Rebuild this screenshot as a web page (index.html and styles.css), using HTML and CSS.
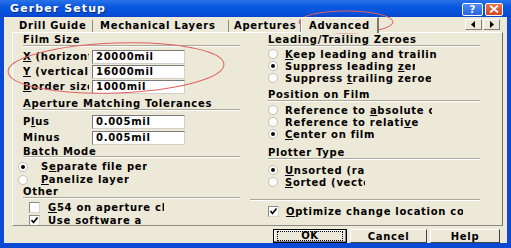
FILE: index.html
```html
<!DOCTYPE html>
<html lang="en">
<head>
    <meta charset="UTF-8">
    <title>Gerber Setup</title>
    <link rel="stylesheet" href="styles.css">
</head>
<body>
    <div class="window">
        <div class="titlebar">
            <span class="title">Gerber Setup</span>
            <div class="title-buttons">
                <span class="tbtn help">?</span>
                <span class="tbtn close">
                    <svg width="10" height="8" viewBox="0 0 10 8"><path d="M1 0.5 L9 7.5 M9 0.5 L1 7.5" stroke="#fff" stroke-width="1.8"/></svg>
                </span>
            </div>
        </div>
        <div class="frame">
            <div class="tabs">
                <div class="tab tab-drill">Drill Guide</div>
                <div class="tab tab-mech">Mechanical Layers</div>
                <div class="tab tab-apert">Apertures</div>
                <div class="tab tab-adv active">Advanced</div>
                <div class="tab-fill"></div>
                <div class="tab-arrows">
                    <span class="arrow"><svg width="5" height="7" viewBox="0 0 5 7"><path d="M4 0 L0 3.5 L4 7 Z" fill="#000"/></svg></span>
                    <span class="arrow"><svg width="5" height="7" viewBox="0 0 5 7"><path d="M1 0 L5 3.5 L1 7 Z" fill="#000"/></svg></span>
                </div>
            </div>
            <div class="panel">
                <div class="col col-left">
                    <div class="heading">Film Size</div>
                    <div class="fields">
                        <div class="field"><span class="label"><u>X</u> (horizontal)</span><span class="input">20000mil</span></div>
                        <div class="field"><span class="label"><u>Y</u> (vertical)</span><span class="input">16000mil</span></div>
                        <div class="field"><span class="label"><u>B</u>order size</span><span class="input">1000mil</span></div>
                    </div>
                    <div class="heading heading-aperture">Aperture Matching Tolerances</div>
                    <div class="fields fields-tol">
                        <div class="field field-tol"><span class="label">P<u>l</u>us</span><span class="input">0.005mil</span></div>
                        <div class="field field-tol"><span class="label">Minus</span><span class="input">0.005mil</span></div>
                    </div>
                    <div class="heading heading-batch">Batch Mode</div>
                    <div class="options options-batch">
                        <div class="option"><span class="radio checked"></span><span class="opt-label opt-sep">S<u>e</u>parate file per layer</span></div>
                        <div class="option"><span class="radio"></span><span class="opt-label opt-panel"><u>P</u>anelize layers</span></div>
                    </div>
                    <div class="heading heading-other">Other</div>
                    <div class="options options-other">
                        <div class="option"><span class="check"></span><span class="opt-label opt-g54"><u>G</u>54 on aperture change</span></div>
                        <div class="option"><span class="check checked"><svg width="9" height="9" viewBox="0 0 9 9"><path d="M1.5 4 L3.5 6.5 L7.5 1.5" stroke="#000" stroke-width="1.6" fill="none"/></svg></span><span class="opt-label opt-soft">Use so<u>f</u>tware arcs</span></div>
                    </div>
                </div>
                <div class="col col-right">
                    <div class="heading">Leading/Trailing Zeroes</div>
                    <div class="options options-zero">
                        <div class="option"><span class="radio"></span><span class="opt-label"><u>K</u>eep leading and trailing zeroes</span></div>
                        <div class="option"><span class="radio checked"></span><span class="opt-label opt-lead">Suppress leading <u>z</u>eroes</span></div>
                        <div class="option"><span class="radio"></span><span class="opt-label opt-trail">Suppress <u>t</u>railing zeroes</span></div>
                    </div>
                    <div class="heading heading-pos">Position on Film</div>
                    <div class="options options-pos">
                        <div class="option"><span class="radio"></span><span class="opt-label opt-abs">Reference to <u>a</u>bsolute origin</span></div>
                        <div class="option"><span class="radio"></span><span class="opt-label opt-rel">Reference to relati<u>v</u>e origin</span></div>
                        <div class="option"><span class="radio checked"></span><span class="opt-label"><u>C</u>enter on film</span></div>
                    </div>
                    <div class="heading heading-plot">Plotter Type</div>
                    <div class="options options-plot">
                        <div class="option"><span class="radio checked"></span><span class="opt-label opt-plot"><u>U</u>nsorted (raster)</span></div>
                        <div class="option"><span class="radio"></span><span class="opt-label opt-plot"><u>S</u>orted (vector)</span></div>
                    </div>
                    <div class="divider"></div>
                    <div class="option option-opt"><span class="check checked"><svg width="9" height="9" viewBox="0 0 9 9"><path d="M1.5 4 L3.5 6.5 L7.5 1.5" stroke="#000" stroke-width="1.6" fill="none"/></svg></span><span class="opt-label opt-wide"><u>O</u>ptimize change location commands</span></div>
                </div>
            </div>
            <div class="buttons">
                <span class="btn btn-ok"><span class="focus">OK</span></span>
                <span class="btn btn-cancel">Cancel</span>
                <span class="btn btn-help">Help</span>
            </div>
        </div>
        <svg class="marks" width="511" height="248" viewBox="0 0 511 248">
            <ellipse cx="116" cy="68" rx="108" ry="25" transform="rotate(-2 116 68)" fill="none" stroke="#e06060" stroke-width="1"/>
            <ellipse cx="346" cy="22" rx="47" ry="11" fill="none" stroke="#e06060" stroke-width="1"/>
        </svg>
    </div>
</body>
</html>
```

FILE: styles.css
```css
body {
    margin: 0;
    background: #ffffff;
}
.window {
    position: relative;
    width: 511px;
    height: 248px;
    display: flex;
    flex-direction: column;
    font-family: "DejaVu Sans", Verdana, sans-serif;
    font-weight: bold;
    font-size: 10px;
    letter-spacing: 0.7px;
    color: #000;
}
.titlebar {
    height: 17px;
    display: flex;
    align-items: center;
    justify-content: space-between;
    padding: 0 8px 0 10px;
    background: linear-gradient(#2b72e8, #0a58e0 40%, #0650d8 80%, #0845c8);
}
.title {
    color: #fff;
    font-size: 11px;
    letter-spacing: 1.1px;
    text-shadow: 1px 1px #0a2a80;
}
.title-buttons {
    display: flex;
    gap: 2px;
    padding-top: 1px;
}
.tbtn {
    height: 11px;
    border: 1px solid #fff;
    border-radius: 2px;
    display: flex;
    align-items: center;
    justify-content: center;
    color: #fff;
    font-size: 10px;
    letter-spacing: 0;
}
.help {
    width: 19px;
    background: linear-gradient(#4d8cf5, #2a64e0);
}
.close {
    width: 16px;
    background: linear-gradient(#e8734e, #d2451e);
}
.frame {
    flex: 1;
    display: flex;
    flex-direction: column;
    background: #ece9d8;
    border-left: 4px solid #0a4ad4;
    border-right: 4px solid #0a4ad4;
    border-bottom: 5px solid #0a4ad4;
}
.tabs {
    height: 15px;
    display: flex;
    align-items: flex-end;
    margin-left: 8px;
    margin-right: 7px;
}
.tab {
    height: 12px;
    line-height: 12px;
    box-sizing: border-box;
    white-space: nowrap;
    border-right: 1px solid #8a8a80;
}
.tab-drill {
    width: 81px;
    padding-left: 7px;
}
.tab-mech {
    width: 136px;
    padding-left: 7px;
}
.tab-apert {
    width: 72px;
    padding-left: 5px;
}
.tab.active {
    width: 78px;
    height: 16px;
    line-height: 15px;
    padding-left: 7px;
    margin-bottom: -1px;
    background: #ece9d8;
    border-left: 1px solid #fff;
    border-top: 1px solid #fff;
    border-right: 2px solid #7a7a70;
    position: relative;
    z-index: 1;
}
.tab-fill {
    flex: 1;
}
.tab-arrows {
    display: flex;
    gap: 1px;
    align-self: flex-start;
    margin-top: 2px;
}
.arrow {
    width: 17px;
    height: 11px;
    box-sizing: border-box;
    display: flex;
    align-items: center;
    justify-content: center;
    background: #ece9d8;
    border-top: 1px solid #fff;
    border-left: 1px solid #fff;
    border-right: 1px solid #808080;
    border-bottom: 1px solid #808080;
}
.panel {
    height: 194px;
    box-sizing: border-box;
    margin: 0 4px 0 8px;
    padding: 1px 0 0 10px;
    border-top: 1px solid #fff;
    border-left: 1px solid #fff;
    border-right: 1px solid #6f6f68;
    border-bottom: 1px solid #8c8c84;
    display: grid;
    grid-template-columns: 245px 1fr;
    overflow: hidden;
}
.col {
    display: flex;
    flex-direction: column;
}
.heading {
    height: 11px;
    line-height: 11px;
    white-space: nowrap;
    border-bottom: 1px solid #aca899;
    box-shadow: 0 1px #fff;
}
.col-left .heading {
    width: 217px;
}
.col-right .heading {
    width: 212px;
}
.fields {
    margin-top: 4px;
    display: flex;
    flex-direction: column;
}
.field {
    height: 15px;
    display: flex;
    align-items: flex-start;
}
.label {
    width: 66px;
    margin-right: 3px;
    line-height: 14px;
    white-space: nowrap;
    overflow: hidden;
}
.input {
    width: 93px;
    height: 14px;
    line-height: 12px;
    box-sizing: border-box;
    padding-left: 3px;
    background: #fff;
    border-top: 1px solid #7a7a7a;
    border-left: 1px solid #7a7a7a;
    border-right: 1px solid #d4d0c8;
    border-bottom: 1px solid #d4d0c8;
}
.heading-aperture {
    margin-top: 3px;
}
.fields-tol {
    margin-top: 5px;
}
.field-tol {
    height: 16px;
}
.heading-batch {
    height: 9px;
    line-height: 9px;
}
.options {
    display: flex;
    flex-direction: column;
}
.option {
    height: 13px;
    display: flex;
    align-items: center;
}
.options-batch {
    margin-top: 3px;
    margin-left: -5px;
}
.options-batch .radio {
    margin-right: 13px;
}
.options-other {
    margin-top: 3px;
    margin-left: 6px;
}
.options-other .check {
    margin-right: 8px;
}
.opt-label {
    white-space: nowrap;
    overflow: hidden;
    width: 152px;
}
.opt-sep {
    width: 106px;
}
.opt-panel {
    width: 88px;
}
.opt-g54 {
    width: 116px;
}
.opt-soft {
    width: 94px;
}
.opt-lead {
    width: 130px;
}
.opt-trail {
    width: 146px;
}
.opt-abs {
    width: 147px;
}
.opt-rel {
    width: 137px;
}
.opt-plot {
    width: 80px;
}
.opt-wide {
    width: 177px;
}
.radio {
    width: 10px;
    height: 10px;
    box-sizing: border-box;
    border-radius: 50%;
    background: #fff;
    border: 1px solid #c2c0b4;
    display: flex;
    align-items: center;
    justify-content: center;
    flex-shrink: 0;
}
.radio.checked::after {
    content: "";
    width: 4px;
    height: 4px;
    border-radius: 50%;
    background: #000;
}
.check {
    width: 11px;
    height: 11px;
    box-sizing: border-box;
    background: #fff;
    border-top: 1px solid #8a8a86;
    border-left: 1px solid #8a8a86;
    border-right: 1px solid #d8d6cc;
    border-bottom: 1px solid #d8d6cc;
    display: flex;
    align-items: center;
    justify-content: center;
    flex-shrink: 0;
}
.col-right .option {
    height: 12px;
}
.col-right .radio {
    margin-right: 7px;
}
.options-zero {
    margin-top: 2px;
}
.heading-pos {
    margin-top: 5px;
}
.options-pos {
    margin-top: 3px;
}
.heading-plot {
    margin-top: 8px;
    height: 10px;
    line-height: 10px;
}
.options-plot {
    margin-top: 5px;
}
.divider {
    width: 230px;
    margin-left: -18px;
    height: 11px;
    border-bottom: 1px solid #aca899;
    box-shadow: 0 1px #fff;
}
.option-opt {
    margin-top: 5px;
}
.option-opt .check {
    margin-right: 7px;
}
.buttons {
    margin-top: 3px;
    height: 14px;
    display: flex;
    justify-content: flex-end;
    gap: 3px;
    margin-right: 7px;
}
.btn {
    height: 14px;
    box-sizing: border-box;
    display: flex;
    align-items: center;
    justify-content: center;
    background: #ece9d8;
    border-top: 1px solid #fff;
    border-left: 1px solid #fff;
    border-right: 1px solid #404040;
    border-bottom: 1px solid #404040;
}
.btn-ok {
    width: 74px;
    border: 1px solid #000;
    box-shadow: inset -1px -1px #808080, inset 1px 1px #fff;
}
.focus {
    width: 64px;
    height: 8px;
    line-height: 8px;
    text-align: center;
    border: 1px dotted #000;
}
.btn-cancel {
    width: 77px;
}
.btn-help {
    width: 70px;
}
.marks {
    position: absolute;
    left: 0;
    top: 0;
    pointer-events: none;
}
```
